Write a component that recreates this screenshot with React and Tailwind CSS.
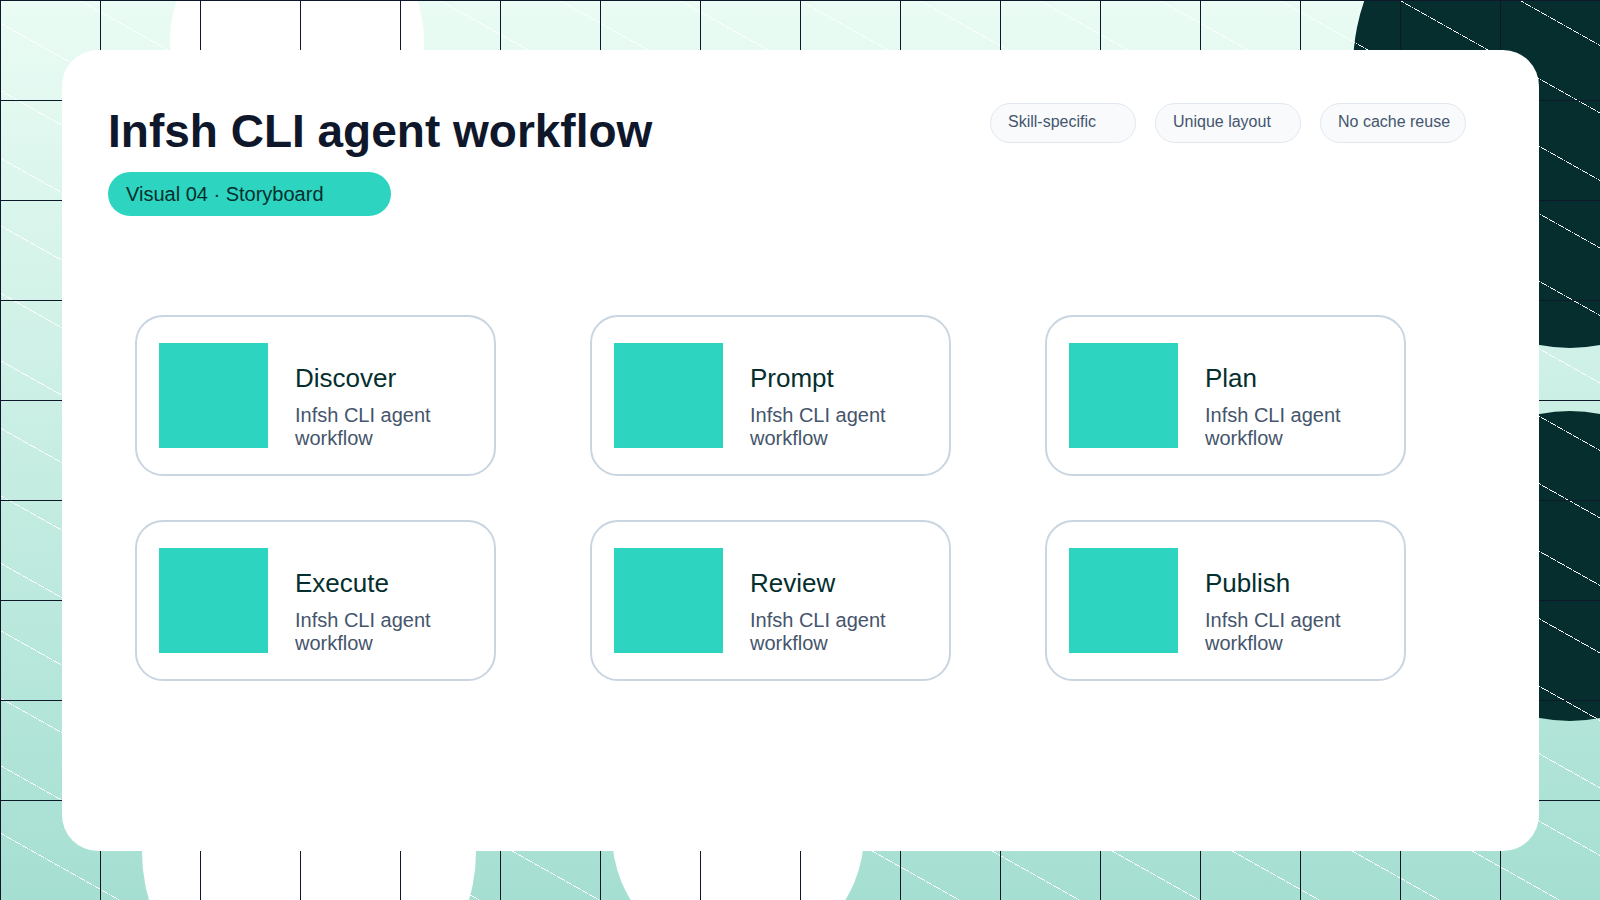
import React from "react";

const steps = ["Discover", "Prompt", "Plan", "Execute", "Review", "Publish"];
const chips = ["Skill-specific", "Unique layout", "No cache reuse"];

const Backdrop = () => (
  <div className="absolute inset-0 overflow-hidden bg-[linear-gradient(180deg,#eafcf4,#a5dfd2)]">
    <div className="absolute left-[170px] top-[-86px] w-[254px] h-[254px] rounded-full bg-white" />
    <div className="absolute left-[142px] top-[685px] w-[334px] h-[334px] rounded-full bg-white" />
    <div className="absolute left-[612px] top-[708px] w-[252px] h-[252px] rounded-full bg-white" />
    <div className="absolute left-[1353px] top-[-139px] w-[414px] h-[414px] rounded-full bg-[#072e2e]" />
    <div className="absolute left-[1415px] top-[38px] w-[310px] h-[310px] rounded-full bg-[#072e2e]" />
    <div className="absolute left-[1415px] top-[411px] w-[310px] h-[310px] rounded-full bg-[#072e2e]" />
    <div className="absolute inset-0 bg-[repeating-linear-gradient(to_top_right,transparent_0,transparent_58.1px,#ffffff_58.1px,#ffffff_58.83px)]" />
    <div className="absolute inset-0 bg-[linear-gradient(#0f172a_1px,transparent_1px),linear-gradient(90deg,#0f172a_1px,transparent_1px)] bg-[size:100px_100px]" />
  </div>
);

const StepCard = ({ title }) => (
  <div className="flex items-center gap-[27px] h-[161px] px-[22px] bg-white rounded-[28px] border-2 border-slate-300">
    <div className="w-[109px] h-[105px] shrink-0 bg-[#2dd4bf]" />
    <div className="flex-1 pt-[22px]">
      <div className="text-[26px] leading-[30px] text-[#042f2e]">{title}</div>
      <div className="mt-[11px] text-xl leading-[23px] text-slate-600">Infsh CLI agent workflow</div>
    </div>
  </div>
);

export default function App() {
  return (
    <div className="relative h-[900px] w-full overflow-hidden font-['Liberation_Sans',Arial,sans-serif]">
      <Backdrop />
      <div className="relative pl-[62px] pt-[50px]">
        <div className="w-[1477px] h-[801px] bg-white rounded-[36px] pt-[53px] pl-[46px] pr-[73px]">
          <div className="flex justify-between items-start">
            <div>
              <h1 className="pt-[2px] h-[53px] text-[46px] leading-[53px] font-bold text-slate-900">Infsh CLI agent workflow</h1>
              <div className="mt-4 w-[283px] h-11 flex items-center pl-[18px] rounded-full bg-[#2dd4bf] text-xl text-[#042f2e]">
                Visual 04 · Storyboard
              </div>
            </div>
            <div className="flex gap-[19px]">
              {chips.map((c) => (
                <div key={c} className="w-[146px] h-10 pl-[17px] pt-[6px] rounded-full border border-slate-200 bg-slate-50 text-base text-slate-600">
                  {c}
                </div>
              ))}
            </div>
          </div>
          <div className="mt-[99px] ml-[27px] w-[1271px] grid grid-cols-3 gap-x-[94px] gap-y-11">
            {steps.map((s) => (
              <StepCard key={s} title={s} />
            ))}
          </div>
        </div>
      </div>
    </div>
  );
}
